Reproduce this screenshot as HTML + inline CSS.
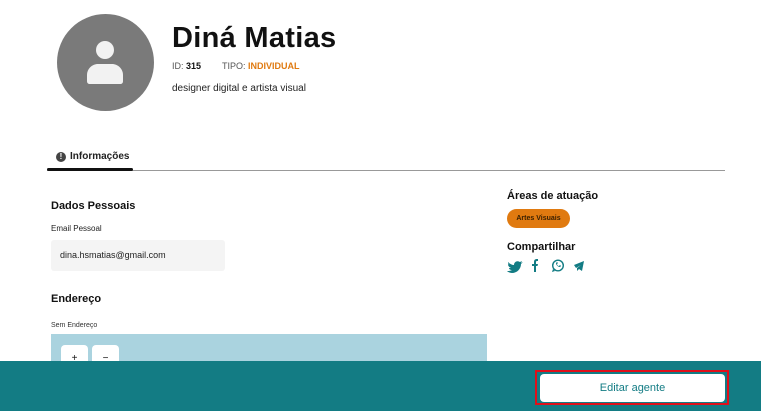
<!DOCTYPE html>
<html><head><meta charset="utf-8"><style>
*{margin:0;padding:0;box-sizing:border-box}
body{width:761px;height:411px;overflow:hidden;background:#fff;font-family:"Liberation Sans",sans-serif;color:#111;position:relative}
.a{position:absolute}
</style></head><body>
<div class="a" style="left:57px;top:14px;width:97px;height:97px;border-radius:50%;background:#7a7a7a"></div>
<svg class="a" style="left:84px;top:40px" width="42" height="44" viewBox="0 0 42 44"><circle cx="21" cy="10" r="9" fill="#f2f2f2"/><path d="M3 41v-6c0-6 5-11 11-11h14c6 0 11 5 11 11v6c0 2-1 3-3 3H6c-2 0-3-1-3-3z" fill="#f2f2f2"/></svg>
<div class="a" style="left:172px;top:22px;font-size:29px;font-weight:bold;letter-spacing:0.3px">Diná Matias</div>
<div class="a" style="left:172px;top:61px;font-size:9px;color:#555">ID: <b style="color:#111">315</b></div>
<div class="a" style="left:222px;top:61px;font-size:9px;color:#555">TIPO: <b style="color:#e07a10">INDIVIDUAL</b></div>
<div class="a" style="left:172px;top:83px;font-size:10px;color:#222">designer digital e artista visual</div>
<div class="a" style="left:56px;top:152px;width:10px;height:10px;border-radius:50%;background:#444;color:#fff;font-size:8px;font-weight:bold;text-align:center;line-height:10px">!</div>
<div class="a" style="left:70px;top:151px;font-size:10px;font-weight:bold;color:#222">Informações</div>
<div class="a" style="left:47px;top:170px;width:678px;height:1px;background:#999"></div>
<div class="a" style="left:47px;top:168px;width:86px;height:3px;border-radius:2px;background:#111"></div>
<div class="a" style="left:51px;top:200px;font-size:11px;font-weight:bold">Dados Pessoais</div>
<div class="a" style="left:51px;top:224px;font-size:8px;color:#222">Email Pessoal</div>
<div class="a" style="left:51px;top:240px;width:174px;height:31px;background:#f4f4f4;border-radius:3px;font-size:9px;padding:10px 9px;color:#222">dina.hsmatias@gmail.com</div>
<div class="a" style="left:51px;top:293px;font-size:11px;font-weight:bold">Endereço</div>
<div class="a" style="left:51px;top:322px;font-size:7px;color:#333">Sem Endereço</div>
<div class="a" style="left:51px;top:334px;width:436px;height:27px;background:#aad3df"></div>
<div class="a" style="left:61px;top:345px;width:27px;height:20px;background:#fff;border-radius:4px;font-size:10px;text-align:center;padding-top:8px">+</div>
<div class="a" style="left:92px;top:345px;width:27px;height:20px;background:#fff;border-radius:4px;font-size:10px;text-align:center;padding-top:8px">−</div>
<div class="a" style="left:507px;top:190px;font-size:11px;font-weight:bold">Áreas de atuação</div>
<div class="a" style="left:507px;top:209px;width:63px;height:19px;background:#e07a10;border-radius:10px;font-size:7px;font-weight:bold;text-align:center;line-height:19px;color:#3a2000">Artes Visuais</div>
<div class="a" style="left:507px;top:241px;font-size:11px;font-weight:bold">Compartilhar</div>
<svg class="a" style="left:507px;top:259px" width="80" height="14" viewBox="0 0 80 14" fill="#137c84">
<path d="M1 3c2 2 4 3 6 3 0-3 3-5 6-3l2-1-1 2 2-1-2 2c0 5-4 9-9 9-2 0-4-1-5-2 2 0 3 0 5-1-2 0-3-1-3-2h2C2 8 1 7 1 5l2 1C1 5 1 4 1 3z"/>
<path d="M27 13V7h-2V5h2V3c0-2 1-3 3-3h1v2h-1c-1 0-1 1-1 1v2h2l-.5 2H29v6z"/>
<circle cx="51" cy="6.5" r="5.3" fill="none" stroke="#137c84" stroke-width="1.4"/><path d="M45 13l1-3 2 2z"/><path d="M49 4c0 2 2 4 4 4l1-1-1-1-1 1c-1 0-2-1-2-2l1-1-1-1z"/>
<path d="M67 6l10-4-2 10-3-2-2 2v-3l4-3-5 3z"/>
</svg>
<div class="a" style="left:0;top:361px;width:761px;height:50px;background:#137c84"></div>
<div class="a" style="left:535px;top:370px;width:194px;height:35px;border:2px solid #e0101a"></div>
<div class="a" style="left:540px;top:374px;width:185px;height:28px;background:#fff;border-radius:4px;font-size:11px;color:#137c84;text-align:center;line-height:28px">Editar agente</div>
</body></html>
